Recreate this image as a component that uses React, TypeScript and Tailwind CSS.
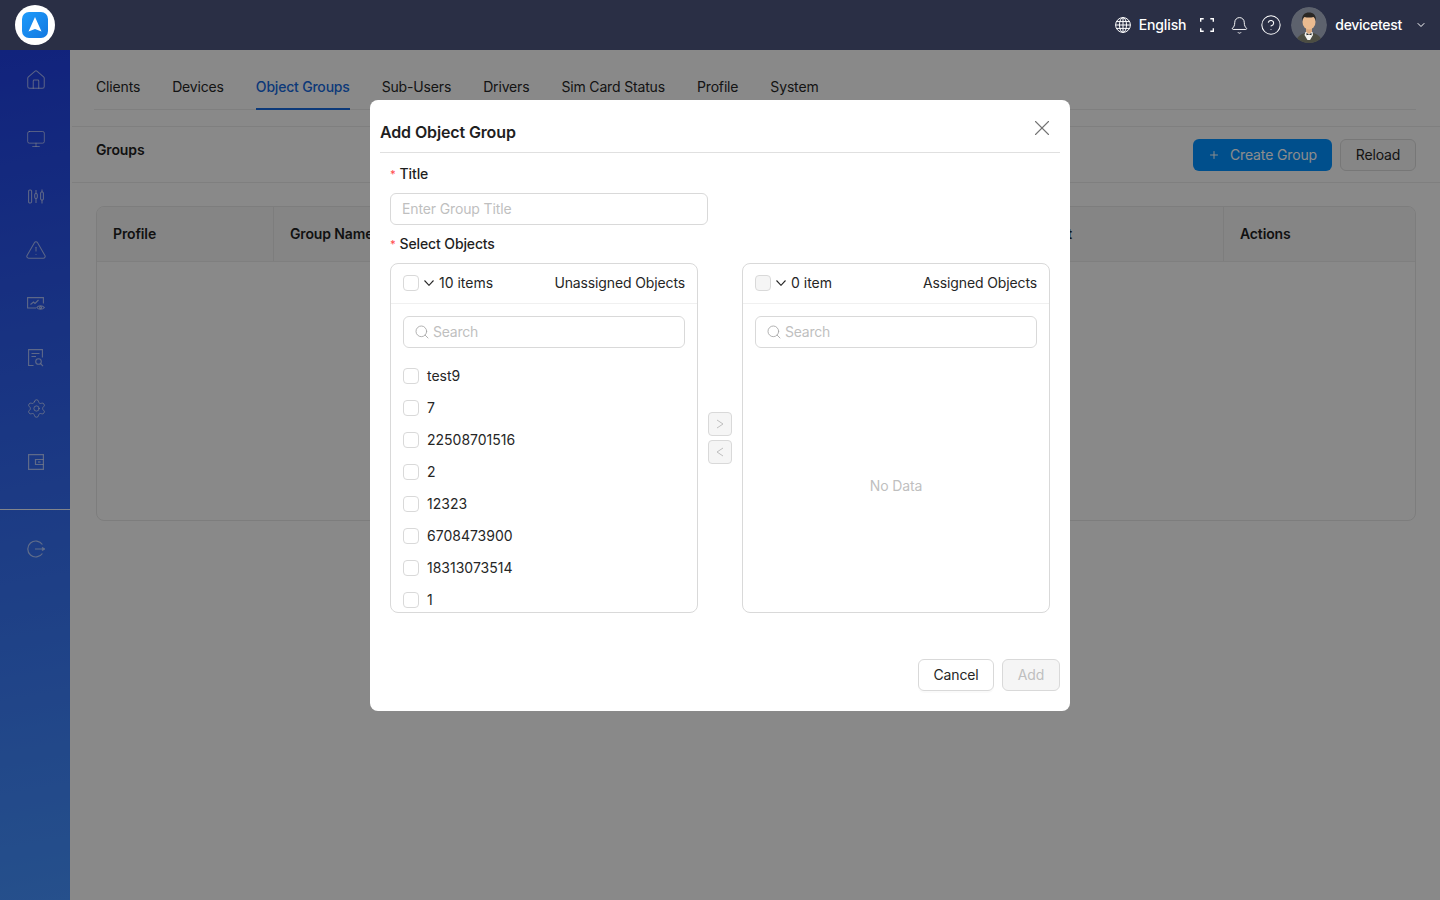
import { AlertTriangle, Bell, ChevronDown, CircleHelp, House, Monitor, Plus, Search, Settings, X } from "lucide-react"

const tabs = ["Clients", "Devices", "Object Groups", "Sub-Users", "Drivers", "Sim Card Status", "Profile", "System"]
const items = ["test9", "7", "22508701516", "2", "12323", "6708473900", "18313073514", "1"]

/* ================= CUSTOM ICONS ================= */

function TuneIcon() {
  return (
    <svg width="16" height="15" viewBox="0 0 16 15" fill="none" stroke="currentColor" strokeWidth="1.1">
      <rect x="0.6" y="1" width="3" height="13" rx="1.2" />
      <rect x="6.700" y="4.500" width="2.600" height="5" rx="1.200" />
      <rect x="12.600" y="3" width="2.800" height="8" rx="1.200" />
      <path d="M8 1v3.500M8 9.500V14M14 .5V3M14 11v3.500" />
    </svg>
  )
}

function ChartEyeIcon() {
  return (
    <svg width="18" height="14" viewBox="0 0 18 14" fill="none" stroke="currentColor" strokeWidth="1.1">
      <path d="M9 11H.6V.6h15.800v6" />
      <path d="M3.500 7.500l3-2.500 1.500 1.500 3.500-3.500" />
      <path d="M9.800 10.500c1.700-2.300 5.600-2.300 7.600 0-2 2.400-5.900 2.400-7.600 0z" />
      <circle cx="13.600" cy="10.500" r="1" />
    </svg>
  )
}

function ReportIcon() {
  return (
    <svg width="16" height="18" viewBox="0 0 16 18" fill="none" stroke="currentColor" strokeWidth="1.1">
      <path d="M5.500 16.500H.6V.6h13.800v8" />
      <path d="M3.500 4.500h8M3.500 7.500h4.500" />
      <circle cx="10.500" cy="12.500" r="2.800" />
      <path d="M12.600 14.600l2.400 2.600" />
    </svg>
  )
}

function WalletIcon() {
  return (
    <svg width="16" height="16" viewBox="0 0 16 16" fill="none" stroke="currentColor" strokeWidth="1.2">
      <path d="M.6.6h14.800v14.800H.6z" />
      <path d="M15.400 5.500H7.500v5h7.900" />
      <path d="M10 8h2.500" />
    </svg>
  )
}

function LogoutIcon() {
  return (
    <svg width="18" height="18" viewBox="0 0 18 18" fill="none" stroke="currentColor" strokeWidth="1.2">
      <path d="M15.400 4.500A8 8 0 1 0 15.400 13.500" />
      <path d="M8 9h9.500M15 7.500l2.500 1.500-2.500 1.500" />
    </svg>
  )
}

function GlobeIcon() {
  return (
    <svg width="16" height="16" viewBox="0 0 16 16" fill="none" stroke="currentColor" strokeWidth="1">
      <circle cx="8" cy="8" r="7.400" />
      <ellipse cx="8" cy="8" rx="3.500" ry="7.400" />
      <path d="M8 .6v14.800M1.500 4.600h13M.6 8h14.800M1.500 11.400h13" />
    </svg>
  )
}

function FullscreenIcon() {
  return (
    <svg width="14" height="14" viewBox="0 0 14 14" fill="none" stroke="currentColor" strokeWidth="1.4">
      <path d="M.7 3.700v-3h3M10.300.7h3v3M13.300 10.300v3h-3M3.700 13.300h-3v-3" />
    </svg>
  )
}

function SmallChevron() {
  return (
    <svg width="10" height="6" viewBox="0 0 10 6" fill="none" stroke="currentColor" strokeWidth="1.1" className="ml-[5px] mr-[5px] shrink-0">
      <path d="M.5.500L5 5.300 9.500.500" />
    </svg>
  )
}

function ArrowGlyph({ d }: { d: string }) {
  return (
    <svg width="8" height="10" viewBox="0 0 8 10" fill="none" stroke="currentColor" strokeWidth="1">
      <path d={d} />
    </svg>
  )
}

function Logo() {
  return (
    <div className="w-10 h-10 rounded-full bg-white flex items-center justify-center">
      <svg width="26" height="26" viewBox="0 0 26 26">
        <defs>
          <linearGradient id="logoBg" x1="0" y1="0" x2="1" y2="1">
            <stop offset="0" stopColor="#1e9bfb" />
            <stop offset="1" stopColor="#1378e0" />
          </linearGradient>
        </defs>
        <rect width="26" height="26" rx="7" fill="url(#logoBg)" />
        <path d="M13 5l6.500 14.500L13 17l-6.500 2.500z" fill="#fff" />
      </svg>
    </div>
  )
}

function Avatar() {
  return (
    <svg width="36" height="36" viewBox="0 0 36 36" className="rounded-full">
      <circle cx="18" cy="18" r="18" fill="#5d626d" />
      <path d="M5 36c.5-6 4-8.500 9-10h8c5 1.500 8.500 4 9 10z" fill="#4c4d42" />
      <path d="M14.500 25h7l.5 3-3 5h-2.500l-3-5z" fill="#f4f4f0" />
      <path d="M15.500 26l2.500 1.200 2.500-1.200v2.200l-2.500-.8-2.500.8z" fill="#20201e" />
      <path d="M15 20h6v5l-3 2-3-2z" fill="#d9a97f" />
      <ellipse cx="18" cy="15" rx="6.500" ry="7.500" fill="#eabb90" />
      <path d="M11 14c-.5-6 3-8.500 7-8.500s7.500 2.500 7 8.500c-.6-2.500-1.500-3.500-2.500-4-2.800.8-6.200.8-9 0-1 .5-1.900 1.500-2.500 4z" fill="#2a2724" />
    </svg>
  )
}

/* ================= SMALL PARTS ================= */

function Checkbox({ disabled }: { disabled?: boolean }) {
  return (
    <span className={`block w-4 h-4 rounded border border-[#d9d9d9] shrink-0 ${disabled ? "bg-[#f5f5f5]" : "bg-white"}`} />
  )
}

function SearchBox() {
  return (
    <div className="h-8 flex items-center gap-[3px] px-[10px] border border-[#d9d9d9] rounded-md text-[#bfbfbf] tracking-[-0.25px]">
      <Search size={16} strokeWidth={1.3} className="text-[#a6a6a6]" />
      <span>Search</span>
    </div>
  )
}

function TransferHeader({ count, title, disabled }: { count: string; title: string; disabled?: boolean }) {
  return (
    <div className="h-10 shrink-0 flex items-center px-3 pb-px border-b border-[#f0f0f0]">
      <Checkbox disabled={disabled} />
      <SmallChevron />
      <span className="tracking-normal">{count}</span>
      <span className="ml-auto">{title}</span>
    </div>
  )
}

function Label({ text }: { text: string }) {
  return (
    <div className="h-[22px] flex items-center font-medium text-[#1f1f1f]">
      <span className="text-[#ff4d4f] mr-[4px] text-[11px] leading-none">*</span>
      {text}
    </div>
  )
}

function Dialog() {
  return (
    <div className="w-[700px] h-[611px] bg-white rounded-lg px-[10px] flex flex-col text-sm text-[#262626]">
      <div className="h-[53px] shrink-0 flex items-end justify-between border-b border-[#e0e0e0] pb-[9px]">
        <span className="text-base font-semibold leading-[22px] text-[#1f1f1f]">Add Object Group</span>
        <X size={26} strokeWidth={1} className="mb-[2px] mr-[5px] text-[#737373]" />
      </div>

      <div className="px-[10px] pt-[10px]">
        <Label text="Title" />
        <div className="mt-[8px] w-[318px] h-8 flex items-center px-[11px] border border-[#d9d9d9] rounded-md text-[#bfbfbf]">
          Enter Group Title
        </div>
        <div className="mt-2">
          <Label text="Select Objects" />
        </div>

        <div className="mt-2 flex h-[350px]">
          <div className="w-[308px] border border-[#d9d9d9] rounded-lg flex flex-col overflow-hidden">
            <TransferHeader count="10 items" title="Unassigned Objects" />
            <div className="px-3 pt-3 pb-3">
              <SearchBox />
            </div>
            <div className="flex-1 overflow-hidden tracking-normal">
              {items.map((item) => (
                <div key={item} className="h-8 flex items-center gap-2 px-3">
                  <Checkbox />
                  <span>{item}</span>
                </div>
              ))}
            </div>
          </div>

          <div className="w-11 flex flex-col items-center justify-center gap-1">
            <div className="w-6 h-6 rounded bg-[#f5f5f5] border border-[#d9d9d9] flex items-center justify-center text-[#bfbfbf]">
              <ArrowGlyph d="M1 1l6 4-6 4" />
            </div>
            <div className="w-6 h-6 rounded bg-[#f5f5f5] border border-[#d9d9d9] flex items-center justify-center text-[#bfbfbf]">
              <ArrowGlyph d="M7 1L1 5l6 4" />
            </div>
          </div>

          <div className="w-[308px] border border-[#d9d9d9] rounded-lg flex flex-col overflow-hidden">
            <TransferHeader count="0 item" title="Assigned Objects" disabled />
            <div className="px-3 pt-3">
              <SearchBox />
            </div>
            <div className="flex-1 flex items-center justify-center text-[#bfbfbf] pt-[12px]">No Data</div>
          </div>
        </div>
      </div>

      <div className="mt-[46px] flex justify-end gap-2">
        <div className="w-[76px] h-8 flex items-center justify-center border border-[#d9d9d9] rounded-md shadow-[0_2px_0_rgba(0,0,0,0.02)]">Cancel</div>
        <div className="w-[58px] h-8 flex items-center justify-center border border-[#d9d9d9] rounded-md bg-[#f5f5f5] text-[#bfbfbf]">Add</div>
      </div>
    </div>
  )
}

/* ================= PAGE ================= */

export default function App() {
  return (
    <div className="h-[900px] overflow-hidden flex flex-col bg-[#fafafa] font-['Inter',sans-serif] text-sm tracking-[-0.13px] text-[#262626]">
      <header className="relative z-20 h-[50px] shrink-0 bg-[#2a2f45] flex items-center pl-[15px] pr-[13px] text-white">
        <Logo />
        <div className="ml-auto flex items-center font-medium">
          <GlobeIcon />
          <span className="ml-2">English</span>
          <span className="ml-[14px]"><FullscreenIcon /></span>
          <Bell size={19} strokeWidth={1.2} className="ml-[16px]" />
          <CircleHelp size={22} strokeWidth={1.1} className="ml-[11px]" />
          <span className="ml-[9px]"><Avatar /></span>
          <span className="ml-2 tracking-[-0.3px]">devicetest</span>
          <ChevronDown size={12} strokeWidth={2} className="ml-[13px]" />
        </div>
      </header>

      <div className="flex-1 flex min-h-0">
        <aside className="w-[70px] shrink-0 bg-linear-[170deg,#2040e2,#4592ff] text-white/60 flex flex-col">
          <div className="h-[60px] pl-[2px] flex items-center justify-center"><House size={22} strokeWidth={1.1} /></div>
          <div className="h-[58px] pl-[2px] flex items-center justify-center"><Monitor size={20} strokeWidth={1.1} /></div>
          <div className="h-[56px] pl-[2px] flex items-center justify-center"><TuneIcon /></div>
          <div className="h-[52px] pl-[2px] flex items-center justify-center"><AlertTriangle size={22} strokeWidth={1.1} /></div>
          <div className="h-[56px] pl-[2px] flex items-center justify-center"><ChartEyeIcon /></div>
          <div className="h-[52px] pl-[2px] flex items-center justify-center"><ReportIcon /></div>
          <div className="h-[48px] pl-[2px] flex items-center justify-center"><Settings size={21} strokeWidth={1.1} /></div>
          <div className="h-[60px] pl-[2px] flex items-center justify-center"><WalletIcon /></div>
          <div className="h-px bg-white/90 mt-[17px]" />
          <div className="h-[78px] pl-[2px] flex items-center justify-center"><LogoutIcon /></div>
        </aside>

        <main className="flex-1 min-w-0">
          <div className="mx-[24px] pl-[2px] h-[60px] flex items-end gap-8 border-b border-[#e8e8e8]">
            {tabs.map((tab) => (
              <div
                key={tab}
                className={`h-[33px] -mb-px border-b-2 ${tab === "Object Groups" ? "border-[#1668dc] text-[#1668dc] font-medium tracking-[-0.2px]" : "border-transparent tracking-[-0.16px]"}`}
              >
                {tab}
              </div>
            ))}
          </div>

          <div className="mt-4 h-[57px] ml-[2px] border-y border-[#e8e8e8] flex justify-between pl-[24px] pr-[24px]">
            <span className="font-semibold mt-[13px] text-[#1f1f1f]">Groups</span>
            <div className="flex gap-2 mt-3">
              <div className="w-[139px] h-8 rounded-md bg-[#0091ff] text-white flex items-center justify-center gap-[10px]">
                <Plus size={12} />
                Create Group
              </div>
              <div className="w-[76px] h-8 rounded-md border border-[#d9d9d9] bg-[#f5f5f5] flex items-center justify-center">Reload</div>
            </div>
          </div>

          <div className="ml-[26px] mr-[24px] mt-[23px] h-[315px] border border-[#e4e4e4] rounded-lg overflow-hidden">
            <div className="h-[55px] bg-[#f2f2f2] border-b border-[#e8e8e8] grid grid-cols-[176px_1fr_auto_192px] font-semibold text-[#1f1f1f]">
              <div className="px-4 flex items-center">Profile</div>
              <div className="px-4 flex items-center border-l border-[#e4e4e4]">Group Name</div>
              <div className="pr-[151px] flex items-center">Object Count</div>
              <div className="px-4 flex items-center border-l border-[#e4e4e4]">Actions</div>
            </div>
          </div>
        </main>
      </div>

      <div className="fixed inset-0 z-10 bg-black/45 flex items-start justify-center pt-[100px]">
        <Dialog />
      </div>
    </div>
  )
}
